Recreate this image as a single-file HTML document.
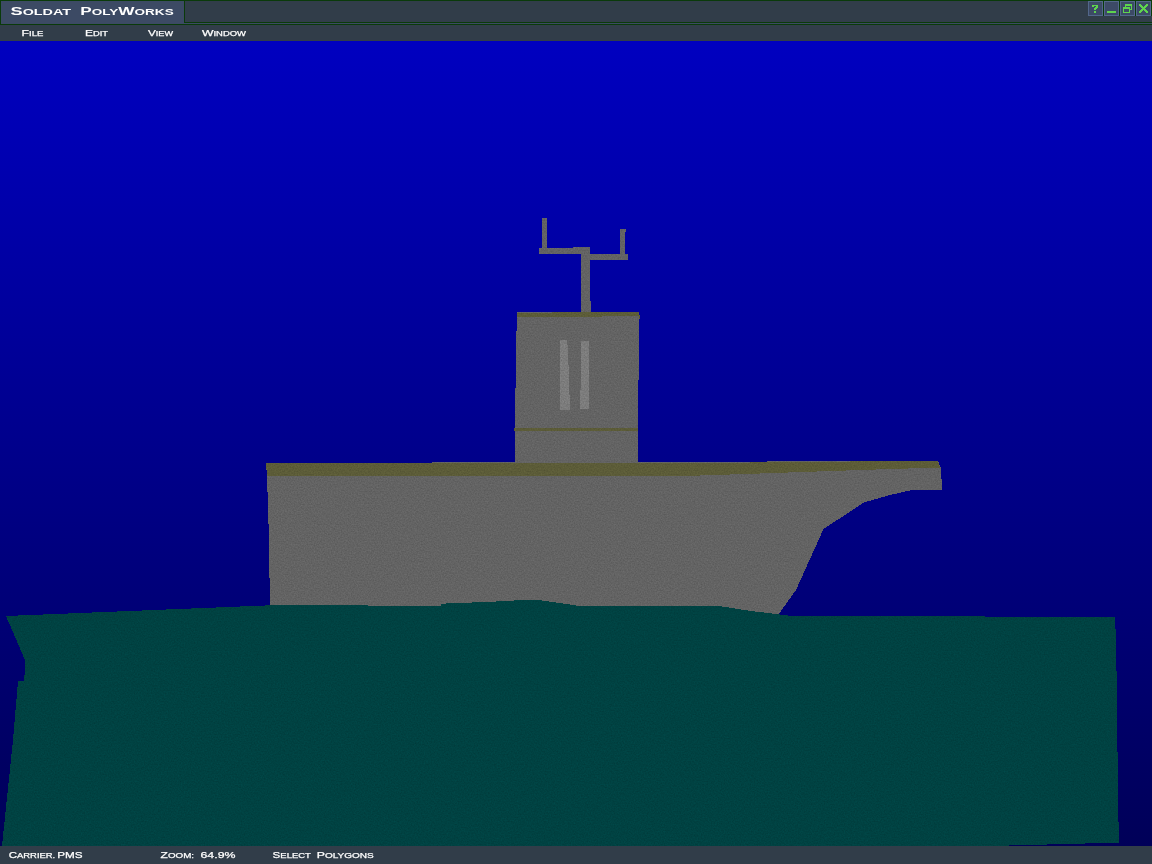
<!DOCTYPE html>
<html lang="en">
<head>
<meta charset="utf-8">
<title>Soldat PolyWorks</title>
<style>
html,body{margin:0;padding:0;width:1152px;height:864px;overflow:hidden;background:#000058;}
body{position:relative;font-family:"Liberation Sans",sans-serif;}
#scene{position:absolute;left:0;top:0;width:1152px;height:864px;display:block;}
.ui text{font-family:"Liberation Sans",sans-serif;font-weight:bold;fill:#ffffff;}
.ui text.th{font-weight:normal;stroke:#ffffff;stroke-width:0.25;}
</style>
</head>
<body>
<svg id="scene" width="1152" height="864" viewBox="0 0 1152 864">
  <defs>
    <linearGradient id="sky" x1="0" y1="41" x2="0" y2="846" gradientUnits="userSpaceOnUse">
      <stop offset="0" stop-color="#0000c0"/>
      <stop offset="1" stop-color="#000058"/>
    </linearGradient>
    <filter id="ident" x="0" y="0" width="1152" height="864" filterUnits="userSpaceOnUse" color-interpolation-filters="sRGB"><feOffset dx="0" dy="0"/></filter>
    <filter id="grain" x="0" y="0" width="1152" height="864" filterUnits="userSpaceOnUse" color-interpolation-filters="sRGB">
      <feTurbulence type="fractalNoise" baseFrequency="0.7" numOctaves="2" seed="7" result="n"/>
      <feColorMatrix in="n" type="matrix" values="1 0 0 0 0  1 0 0 0 0  1 0 0 0 0  0 0 0 0 1" result="g"/>
      <feComposite in="SourceGraphic" in2="g" operator="arithmetic" k1="0.3" k2="0.85" k3="0" k4="0" result="m"/>
      <feComposite in="m" in2="SourceAlpha" operator="in"/>
    </filter>
  </defs>
  <!-- background -->
  <rect x="0" y="41" width="1152" height="805" fill="url(#sky)"/>

  <!-- ship -->
  <g id="ship" shape-rendering="crispEdges" filter="url(#grain)">
    <!-- antenna -->
    <g fill="#636363">
      <rect x="542" y="218" width="5" height="31"/>
      <rect x="539" y="248" width="43" height="6"/>
      <rect x="573" y="247" width="17" height="7"/>
      <rect x="581" y="247" width="9" height="66"/>
      <rect x="589" y="301" width="2" height="12"/>
      <rect x="589" y="254" width="39" height="6"/>
      <rect x="620" y="229" width="5" height="26"/>
      <rect x="620" y="229" width="6" height="3"/>
    </g>
    <!-- tower -->
    <polygon points="517,312 639,312 639,380 638,380 638,463 515,463 515,388 516,388 516,331 517,331" fill="#636363"/>
    <polygon points="517,313.4 552,313.4 552,312 639,312 639,315 640,315 640,319 639,319 639,316 602,316 602,317 517,317" fill="#5c5c38"/>
    <polygon points="560,340 567,340 568,350 570,410 560,410" fill="#7c7c7c"/>
    <polygon points="581.5,341 589,341 589,409 579.6,409 581,380" fill="#7c7c7c"/>
    <rect x="514" y="428" width="124" height="3" fill="#5c5c38"/>
    <!-- hull -->
    <polygon points="266,463 938,461 941,468 942,490 914,489.5 890,495 864,502.5 823.5,529 796,590 778,615 270,615 269,540 267,476" fill="#636363"/>
    <polygon points="266,463 700,463 850,461.5 938,461 940,467.5 860,470 760,473.5 700,475.5 267,475.5" fill="#5c5c38"/>
  </g>

  <!-- water -->
  <g id="water" shape-rendering="crispEdges" filter="url(#grain)">
    <polygon fill="#004242" points="6,616 270,605.3 368,605.5 368,606 441,606 441,603.7 493,601.7 523,600 538,600 573,605 580,606.3 671,606.5 671,605.5 716,605.5 751,611 778.5,614.3 790,615.7 985,615.8 985,616.7 1115,617 1116,640 1117,700 1118,800 1119,842.6 990,846 2,846 13,740 18,681 24,681 24,675 25,674 25,660"/>
  </g>

  <!-- UI chrome -->
  <g class="ui" shape-rendering="crispEdges">
    <!-- title bar -->
    <rect x="0" y="0" width="1152" height="25" fill="#0a3a0a"/>
    <rect x="1" y="1" width="1151" height="23" fill="#3c4a64"/>
    <rect x="184" y="1" width="968" height="22" fill="#0a3a0a"/>
    <rect x="185" y="1" width="967" height="21" fill="#313d49"/>
    <!-- menu bar -->
    <rect x="0" y="25" width="1152" height="16" fill="#313d49"/>
    <!-- status bar -->
    <rect x="0" y="846" width="1152" height="18" fill="#313d49"/>
    <!-- window buttons -->
    <g id="winbtns">
      <rect x="1088" y="1" width="15" height="15" fill="#53678a"/><rect x="1089" y="2" width="13" height="13" fill="#3c4a66"/><rect x="1103" y="0" width="1" height="16" fill="#0a3a0a"/><rect x="1092" y="5" width="6" height="1" fill="#5ed44e"/><rect x="1092" y="6" width="2" height="1" fill="#5ed44e"/><rect x="1096" y="6" width="2" height="1" fill="#5ed44e"/><rect x="1095" y="7" width="3" height="1" fill="#5ed44e"/><rect x="1094" y="8" width="3" height="1" fill="#5ed44e"/><rect x="1094" y="9" width="2" height="1" fill="#5ed44e"/><rect x="1094" y="11" width="2" height="2" fill="#5ed44e"/>
      <rect x="1104" y="1" width="15" height="15" fill="#53678a"/><rect x="1105" y="2" width="13" height="13" fill="#3c4a66"/><rect x="1119" y="0" width="1" height="16" fill="#0a3a0a"/><rect x="1107" y="11" width="9" height="2" fill="#5ed44e"/>
      <rect x="1120" y="1" width="15" height="15" fill="#53678a"/><rect x="1121" y="2" width="13" height="13" fill="#3c4a66"/><rect x="1135" y="0" width="1" height="16" fill="#0a3a0a"/><rect x="1125" y="4" width="7" height="2" fill="#5ed44e"/><rect x="1131" y="6" width="1" height="4" fill="#5ed44e"/><rect x="1125" y="6" width="1" height="2" fill="#5ed44e"/><rect x="1130" y="9" width="2" height="1" fill="#5ed44e"/><rect x="1123" y="7" width="7" height="2" fill="#5ed44e"/><rect x="1123" y="9" width="1" height="4" fill="#5ed44e"/><rect x="1129" y="9" width="1" height="4" fill="#5ed44e"/><rect x="1123" y="12" width="7" height="1" fill="#5ed44e"/>
      <rect x="1136" y="1" width="15" height="15" fill="#53678a"/><rect x="1137" y="2" width="13" height="13" fill="#3c4a66"/><rect x="1151" y="0" width="1" height="16" fill="#0a3a0a"/><g opacity="1"><rect x="1140" y="4" width="1" height="1" fill="#5ed44e"/><rect x="1139" y="5" width="1" height="1" fill="#5ed44e"/><rect x="1146" y="4" width="1" height="1" fill="#5ed44e"/><rect x="1147" y="5" width="1" height="1" fill="#5ed44e"/><rect x="1141" y="5" width="1" height="1" fill="#5ed44e"/><rect x="1140" y="6" width="1" height="1" fill="#5ed44e"/><rect x="1145" y="5" width="1" height="1" fill="#5ed44e"/><rect x="1146" y="6" width="1" height="1" fill="#5ed44e"/><rect x="1142" y="6" width="1" height="1" fill="#5ed44e"/><rect x="1141" y="7" width="1" height="1" fill="#5ed44e"/><rect x="1144" y="6" width="1" height="1" fill="#5ed44e"/><rect x="1145" y="7" width="1" height="1" fill="#5ed44e"/><rect x="1143" y="7" width="1" height="1" fill="#5ed44e"/><rect x="1142" y="8" width="1" height="1" fill="#5ed44e"/><rect x="1143" y="7" width="1" height="1" fill="#5ed44e"/><rect x="1144" y="8" width="1" height="1" fill="#5ed44e"/><rect x="1144" y="8" width="1" height="1" fill="#5ed44e"/><rect x="1143" y="9" width="1" height="1" fill="#5ed44e"/><rect x="1142" y="8" width="1" height="1" fill="#5ed44e"/><rect x="1143" y="9" width="1" height="1" fill="#5ed44e"/><rect x="1145" y="9" width="1" height="1" fill="#5ed44e"/><rect x="1144" y="10" width="1" height="1" fill="#5ed44e"/><rect x="1141" y="9" width="1" height="1" fill="#5ed44e"/><rect x="1142" y="10" width="1" height="1" fill="#5ed44e"/><rect x="1146" y="10" width="1" height="1" fill="#5ed44e"/><rect x="1145" y="11" width="1" height="1" fill="#5ed44e"/><rect x="1140" y="10" width="1" height="1" fill="#5ed44e"/><rect x="1141" y="11" width="1" height="1" fill="#5ed44e"/><rect x="1147" y="11" width="1" height="1" fill="#5ed44e"/><rect x="1146" y="12" width="1" height="1" fill="#5ed44e"/><rect x="1139" y="11" width="1" height="1" fill="#5ed44e"/><rect x="1140" y="12" width="1" height="1" fill="#5ed44e"/></g><rect x="1139" y="4" width="1" height="1" fill="#5ed44e"/><rect x="1147" y="4" width="1" height="1" fill="#5ed44e"/><rect x="1140" y="5" width="1" height="1" fill="#5ed44e"/><rect x="1146" y="5" width="1" height="1" fill="#5ed44e"/><rect x="1141" y="6" width="1" height="1" fill="#5ed44e"/><rect x="1145" y="6" width="1" height="1" fill="#5ed44e"/><rect x="1142" y="7" width="1" height="1" fill="#5ed44e"/><rect x="1144" y="7" width="1" height="1" fill="#5ed44e"/><rect x="1143" y="8" width="1" height="1" fill="#5ed44e"/><rect x="1143" y="8" width="1" height="1" fill="#5ed44e"/><rect x="1144" y="9" width="1" height="1" fill="#5ed44e"/><rect x="1142" y="9" width="1" height="1" fill="#5ed44e"/><rect x="1145" y="10" width="1" height="1" fill="#5ed44e"/><rect x="1141" y="10" width="1" height="1" fill="#5ed44e"/><rect x="1146" y="11" width="1" height="1" fill="#5ed44e"/><rect x="1140" y="11" width="1" height="1" fill="#5ed44e"/><rect x="1147" y="12" width="1" height="1" fill="#5ed44e"/><rect x="1139" y="12" width="1" height="1" fill="#5ed44e"/>
      
    </g>
  </g>
  <g class="ui" id="labels" filter="url(#ident)">
    <text x="10.5" y="15.1" font-size="11.8" textLength="60.5" lengthAdjust="spacingAndGlyphs">S<tspan font-size="9.3">OLDAT</tspan></text>
    <text x="80.3" y="15.1" font-size="11.8" textLength="93.4" lengthAdjust="spacingAndGlyphs">P<tspan font-size="9.3">OLY</tspan>W<tspan font-size="9.3">ORKS</tspan></text>
    <text class="th" x="21.6" y="36.2" font-size="9" textLength="21.7" lengthAdjust="spacingAndGlyphs">F<tspan font-size="7">ILE</tspan></text>
    <text class="th" x="85" y="36.2" font-size="9" textLength="23" lengthAdjust="spacingAndGlyphs">E<tspan font-size="7">DIT</tspan></text>
    <text class="th" x="148" y="36.2" font-size="9" textLength="25" lengthAdjust="spacingAndGlyphs">V<tspan font-size="7">IEW</tspan></text>
    <text class="th" x="202" y="36.2" font-size="9" textLength="44" lengthAdjust="spacingAndGlyphs">W<tspan font-size="7">INDOW</tspan></text>
    <text class="th" x="8.7" y="858.2" font-size="8.8" textLength="46.5" lengthAdjust="spacingAndGlyphs">C<tspan font-size="7.2">ARRIER.</tspan></text>
    <text class="th" x="57.3" y="858.2" font-size="8.8" textLength="25.4" lengthAdjust="spacingAndGlyphs">PMS</text>
    <text class="th" x="160.6" y="858.2" font-size="8.8" textLength="33.5" lengthAdjust="spacingAndGlyphs">Z<tspan font-size="7.2">OOM:</tspan></text>
    <text class="th" x="200.5" y="858.2" font-size="8.8" textLength="35" lengthAdjust="spacingAndGlyphs">64.9%</text>
    <text class="th" x="272.6" y="858.2" font-size="8.8" textLength="38.3" lengthAdjust="spacingAndGlyphs">S<tspan font-size="7.2">ELECT</tspan></text>
    <text class="th" x="316.8" y="858.2" font-size="8.8" textLength="57" lengthAdjust="spacingAndGlyphs">P<tspan font-size="7.2">OLYGONS</tspan></text>
  </g>
</svg>
</body>
</html>
